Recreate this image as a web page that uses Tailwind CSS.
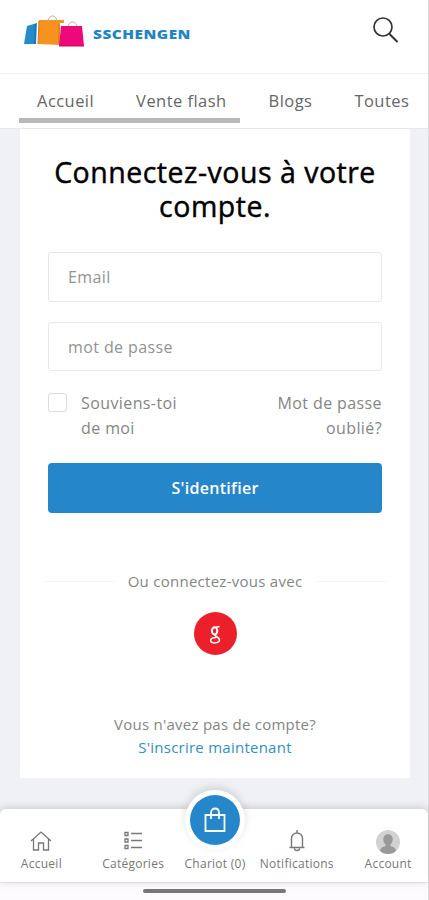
<!DOCTYPE html>
<html lang="fr">
<head>
<meta charset="utf-8">
<title>SSChengen</title>
<script src="https://cdn.jsdelivr.net/npm/@tailwindcss/browser@4"></script>
</head>
<body class="h-[900px] w-[429px] overflow-hidden bg-[#f0f1f5] font-['Open_Sans','Noto_Sans',sans-serif] text-[#777]">
<div class="flex h-[900px] flex-col border-r border-[#dcdce0]">
  <header class="flex h-[74px] shrink-0 items-start justify-between border-b border-[#f0f0f1] bg-white pl-6 pr-[29px]">
    <div class="flex pt-[14px]">
      <svg class="h-[35px] w-[62px]" viewBox="0 0 62 35">
        <path d="M3 12 13 9l-1 21H0L3 12Z" fill="#258bca"/><path d="M11 10v20" stroke="#176ba5"/>
        <path d="M15 6h25v3h-4v22l-22-1L15 6Z" fill="#f6921e"/>
        <path d="M15 7 14 30M35 10v20" stroke="#d87912" fill="none"/>
        <path d="M24 8c0-8 9-8 9 0M44 14c0-8 9-8 9 0" stroke="#b8a6a6" fill="none"/>
        <path d="M37 12h21l2 20H35l2-20Z" fill="#ee087c"/><path d="M35 32h25" stroke="#c50769"/>
      </svg>
      <span class="ml-[7px] mt-[10px] origin-left scale-x-[1.28] text-[12px] font-extrabold leading-[22px] tracking-[0.4px] text-[#2384c2]">SSCHENGEN</span>
    </div>
    <svg class="mt-[16px] h-[27px] w-[28px]" viewBox="0 0 28 27" fill="none" stroke="#333"><circle cx="12" cy="11" r="9" stroke-width="1.7"/><path d="m18.5 18 8 8" stroke-width="2"/></svg>
  </header>
  <nav class="h-[55px] shrink-0 overflow-hidden border-b border-[#e8e8ea] bg-white">
    <div class="flex h-[44px] items-center gap-[42px] whitespace-nowrap pl-[37px] pt-[10px] text-[16.5px] tracking-[0.45px] text-[#666]">
      <a>Accueil</a><a>Vente flash</a><a>Blogs</a><a>Toutes</a>
    </div>
    <div class="ml-[19px] h-[5px] w-[221px] bg-[#b8b8b8]"></div>
  </nav>
  <main class="h-[680px] shrink-0 px-5">
    <section class="flex h-[649px] w-[390px] flex-col bg-white px-7 pt-[26px]">
      <h1 class="whitespace-nowrap text-center text-[28.5px] font-medium leading-[34px] tracking-[0.5px] text-black [-webkit-text-stroke:0.45px_black]">Connectez-vous à votre<br>compte.</h1>
      <div class="mt-[29px] flex h-[50px] w-[334px] shrink-0 items-center rounded-[3px] border border-[#e5e6e8] px-[19px] text-[16px] tracking-[0.4px] text-[#929292]">Email</div>
      <div class="mt-5 flex h-[49px] w-[334px] shrink-0 items-center rounded-[3px] border border-[#e8e9eb] px-[19px] text-[16px] tracking-[0.4px] text-[#929292]">mot de passe</div>
      <div class="mt-[20px] flex h-[50px] w-[334px] shrink-0 justify-between text-[16px] leading-[25px] tracking-[0.4px] text-[#858585]">
        <div class="flex"><span class="mt-[2px] h-[19px] w-[19px] rounded-[3px] border border-[#d8dddf]"></span><span class="ml-[14px]">Souviens-toi<br>de moi</span></div>
        <span class="text-right">Mot de passe<br>oublié?</span>
      </div>
      <button class="mt-[22px] h-[50px] w-[334px] shrink-0 rounded-[4px] bg-[#2586ca] text-[16px] font-semibold tracking-[0.3px] text-white">S'identifier</button>
      <div class="-ml-1 mt-[56px] flex h-6 w-[342px] shrink-0 items-center justify-center gap-[14px] whitespace-nowrap text-[15px] tracking-[0.27px] text-[#858585]"><span class="h-px flex-1 bg-[#f5f5f5]"></span>Ou connectez-vous avec<span class="h-px flex-1 bg-[#f5f5f5]"></span></div>
      <div class="mx-auto mt-[19px] flex h-[43px] w-[43px] shrink-0 items-center justify-center rounded-full bg-[#eb202b]">
        <svg class="mt-[2px] h-5 w-4" viewBox="0 0 16 20" fill="none" stroke="white"><ellipse cx="7.6" cy="5.8" rx="2.7" ry="3.6" stroke-width="2"/><path d="M9 2.2 12.5 1.5M9.5 8.5c-2 1-2.5 1.5-1 2.5 2.4 1.4 4 2.2 4 4 0 3.6-8.9 3.8-8.9.7 0-2.3 2.2-3.2 5.4-3.2" stroke-width="1.5"/></svg>
      </div>
      <div class="mt-[58px] whitespace-nowrap text-center text-[15px] leading-[23px] tracking-[0.25px] text-[#858585]">Vous n'avez pas de compte?<br><a class="text-[#3191b9]">S'inscrire maintenant</a></div>
    </section>
  </main>
  <footer class="relative h-[73px] shrink-0 rounded-t-[6px] bg-white text-[12px] leading-4 tracking-[0.26px] text-[#777] shadow-[0_-1px_9px_rgba(0,0,0,0.18)]">
    <div class="flex h-full whitespace-nowrap pl-px pt-[20px]">
      <div class="flex w-[81px] flex-col items-center gap-[4px]"><svg class="h-[23px] w-6" viewBox="0 0 24 23" fill="none" stroke="#777" stroke-width="1.3"><path d="m2 12 10-9 10 9M4.5 10v11h5v-7h5v7h5V10"/></svg>Accueil</div>
      <div class="flex w-[103px] flex-col items-center gap-[4px]"><svg class="h-[23px] w-5" viewBox="0 0 20 23" fill="none" stroke="#777" stroke-width="1.3"><path d="M2 3.5h3v3H2zM2 10h3v3H2zM2 16.5h3v3H2zM8 4.5h11M8 11.5h11M8 18.5h11"/></svg>Catégories</div>
      <div class="flex w-[61px] flex-col items-center pt-[27px]">Chariot (0)</div>
      <div class="flex w-[103px] flex-col items-center gap-[4px]"><svg class="h-[23px] w-5" viewBox="0 0 20 23" fill="none" stroke="#777" stroke-width="1.4"><path d="M2.5 18.5h15M4.5 18V9.5a5.5 5.5 0 0 1 11 0V18M10 4V1M7.5 19.5a2.5 2 0 0 0 5 0"/></svg>Notifications</div>
      <div class="flex w-[80px] flex-col items-center gap-[2px]"><svg class="mt-px h-6 w-6" viewBox="0 0 24 24"><circle cx="12" cy="12" r="12" fill="#d2d2d2"/><ellipse cx="12" cy="9.5" rx="4.7" ry="5.5" fill="#999"/><path d="M9.5 13h5v3c3 .7 5 2 5.5 5-4 4-12 4-16 0 .5-3 2.5-4.3 5.5-5z" fill="#999"/></svg>Account</div>
    </div>
    <div class="absolute -top-[19px] left-[185px] flex h-[60px] w-[60px] items-center justify-center rounded-full bg-white shadow-[0_-3px_8px_rgba(0,0,0,0.13)]">
      <div class="flex h-[50px] w-[50px] items-center justify-center rounded-full bg-[#2586ca]"><svg class="h-7 w-6" viewBox="0 0 24 28" fill="none" stroke="white" stroke-width="1.8"><path d="M2.5 9h19v16h-19ZM8 13V7c0-6 8-6 8 0v6"/></svg></div>
    </div>
  </footer>
  <div class="flex h-[18px] shrink-0 justify-center border-t border-[#ededee] bg-[#fdfbfd] pt-[6px]"><div class="h-[4px] w-[143px] rounded-full bg-[#777]"></div></div>
</div>
</body>
</html>
